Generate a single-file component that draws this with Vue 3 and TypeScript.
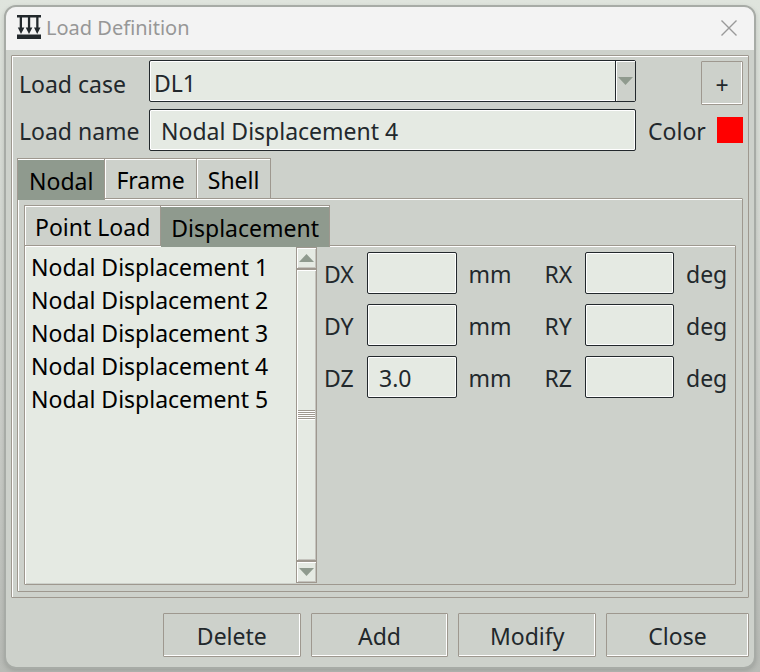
<script setup lang="ts">
import { ref } from 'vue'

interface Field {
  id: string
  value: string
  unit: string
}

const loadCase = ref('DL1')
const loadName = ref('Nodal Displacement 4')
const outerTabs = ['Nodal', 'Frame', 'Shell']
const innerTabs = ['Point Load', 'Displacement']
const outerTab = ref('Nodal')
const innerTab = ref('Displacement')
const loads = [1, 2, 3, 4, 5].map((n) => `Nodal Displacement ${n}`)
const actions = ['Delete', 'Add', 'Modify', 'Close']
const fields = ref<Field[]>([
  { id: 'DX', value: '', unit: 'mm' },
  { id: 'RX', value: '', unit: 'deg' },
  { id: 'DY', value: '', unit: 'mm' },
  { id: 'RY', value: '', unit: 'deg' },
  { id: 'DZ', value: '3.0', unit: 'mm' },
  { id: 'RZ', value: '', unit: 'deg' },
])

function pick(event: Event) {
  loadName.value = (event.target as HTMLSelectElement).value
}
</script>

<template>
  <main class="window">
    <header class="titlebar">
      <svg class="logo" viewBox="0 0 24 24" aria-hidden="true">
        <path d="M0 0H24V2.4H0ZM0 19.6H24V24H0Z" />
        <path d="M2.7 2H5V12.5H7.4L4 19L0.8 12.5H2.7ZM10.9 2H13.2V12.5H15.4L12 19L8.7 12.5H10.9ZM19.2 2H21.5V12.5H23.5L20.2 19L17 12.5H19.2Z" />
      </svg>
      <h1 class="title">Load Definition</h1>
      <button class="dismiss" type="button" aria-label="Close window">
        <svg viewBox="0 0 16 16"><path d="M0.5 0.5L15.5 15.5M15.5 0.5L0.5 15.5" /></svg>
      </button>
    </header>

    <section class="frame">
      <div class="head">
        <label for="load-case">Load case</label>
        <div class="combo">
          <select id="load-case" v-model="loadCase">
            <option>DL1</option>
          </select>
          <span class="drop"><svg viewBox="0 0 15 8"><path d="M0 0H15L7.5 8Z" /></svg></span>
        </div>
        <button class="btn plus" type="button">+</button>
        <label for="load-name">Load name</label>
        <input id="load-name" v-model="loadName" class="entry" type="text" />
        <div class="color">
          <label for="swatch">Color</label>
          <button id="swatch" class="swatch" type="button"></button>
        </div>
      </div>

      <nav class="tabs">
        <button
          v-for="tab in outerTabs"
          :key="tab"
          type="button"
          class="tab wide"
          :class="{ active: tab === outerTab }"
          @click="outerTab = tab"
        >{{ tab }}</button>
      </nav>
      <div class="pane outer">
        <nav class="tabs">
          <button
            v-for="tab in innerTabs"
            :key="tab"
            type="button"
            class="tab"
            :class="{ active: tab === innerTab }"
            @click="innerTab = tab"
          >{{ tab }}</button>
        </nav>
        <div class="pane inner">
          <select class="list" size="5" multiple aria-label="Loads" @change="pick">
            <option v-for="load in loads" :key="load">{{ load }}</option>
          </select>
          <div class="scroll">
            <button class="arrow" type="button" aria-label="Scroll up">
              <svg viewBox="0 0 15 8"><path d="M0 8H15L7.5 0Z" /></svg>
            </button>
            <div class="thumb"><span class="grip"></span></div>
            <button class="arrow" type="button" aria-label="Scroll down">
              <svg viewBox="0 0 15 8"><path d="M0 0H15L7.5 8Z" /></svg>
            </button>
          </div>
          <div class="fields">
            <template v-for="field in fields" :key="field.id">
              <label :for="field.id">{{ field.id }}</label>
              <input :id="field.id" v-model="field.value" class="entry" type="text" />
              <span class="unit">{{ field.unit }}</span>
            </template>
          </div>
        </div>
      </div>
    </section>

    <footer class="actions">
      <button v-for="action in actions" :key="action" class="btn" type="button">{{ action }}</button>
    </footer>
  </main>
</template>

<style>
body {
  background: linear-gradient(#dfe4dd, #cdd0cb 60%, #b8bbb6);
}
</style>

<style scoped>
.window {
  --face: #cdd1cb;
  --field: #e5eae3;
  --edge: #9e988f;
  --accent: #8f9a8e;
  --ink: #22282c;
  box-sizing: border-box;
  display: flex;
  flex-direction: column;
  min-height: calc(100vh - 8px);
  margin: 5px 4px 3px;
  border: 2px solid #a7aba6;
  border-radius: 12px;
  overflow: hidden;
  background: var(--face);
  color: var(--ink);
  font: 23px/32px "Noto Sans", "Open Sans", sans-serif;
  box-shadow: 0 2px 5px rgba(0, 0, 0, 0.15);
}
.window * {
  box-sizing: border-box;
}
button,
input,
select {
  margin: 0;
  padding: 0;
  border: 0;
  border-radius: 0;
  outline: 0;
  background: none;
  color: inherit;
  font: inherit;
}
svg {
  display: block;
}
.titlebar {
  display: flex;
  align-items: center;
  height: 43px;
  padding: 0 17px 2px 11px;
  background: #f3f3f3;
}
.logo {
  width: 24px;
  height: 24px;
  margin-bottom: 2px;
  fill: #22282c;
}
.title {
  flex: 1;
  margin: 0 5px;
  padding-top: 1px;
  color: #979797;
  font-size: 20px;
  font-weight: 400;
}
.dismiss svg {
  width: 16px;
  height: 16px;
  fill: none;
  stroke: #999;
  stroke-width: 1.4;
}
.frame {
  flex: 1;
  display: flex;
  flex-direction: column;
  margin: 5px 5px 0;
  padding: 4px 5px 5px;
  border: 1px solid var(--edge);
  border-radius: 1px;
  box-shadow: inset 1px 1px #fff;
}
.head {
  display: grid;
  grid-template-columns: 130px 1fr 107px;
  grid-template-rows: 45px 42px;
  align-items: center;
  row-gap: 4px;
  margin-bottom: 2px;
  padding-left: 2px;
}
.head label {
  padding-top: 2px;
}
.combo {
  position: relative;
  align-self: start;
  height: 42px;
}
.combo select {
  width: 100%;
  height: 100%;
  padding: 3px 24px 0 4px;
  appearance: none;
}
.combo select,
.entry {
  border: 1px solid var(--ink);
  border-radius: 2px;
  background: var(--field);
  box-shadow: inset 0 0 0 1px #fff;
}
.drop {
  position: absolute;
  top: 1px;
  right: 1px;
  bottom: 1px;
  display: grid;
  place-items: center;
  width: 20px;
  border-left: 1px solid var(--ink);
  background: var(--face);
  box-shadow: inset 1px 1px #fff;
  pointer-events: none;
}
.drop svg,
.arrow svg {
  width: 15px;
  height: 8px;
  fill: var(--accent);
}
.entry {
  width: 100%;
  height: 42px;
  padding: 2px 11px 0;
}
.btn {
  height: 44px;
  padding-top: 2px;
  border: 1px solid var(--edge);
  border-radius: 1px;
  box-shadow: inset -1px -1px #fff;
}
.plus {
  place-self: end;
  width: 42px;
  padding-top: 4px;
}
.color {
  display: flex;
  align-items: center;
  justify-content: space-between;
  padding-left: 12px;
}
.swatch {
  width: 26px;
  height: 26px;
  background: #f00;
}
.tabs {
  display: flex;
  margin-top: 5px;
}
.tab {
  height: 41px;
  padding: 2px 10px 0;
  border: 1px solid var(--edge);
  border-left-width: 0;
  border-bottom: 0;
  box-shadow: inset 1px 1px #fff;
  color: #000;
}
.tab.wide {
  padding: 2px 11px 0;
}
.tab:first-child {
  border-left-width: 1px;
}
.tab.active {
  position: relative;
  height: 42px;
  margin-bottom: -1px;
  background: var(--accent);
  box-shadow: inset 0 1px #fff;
}
.pane {
  flex: 1;
  display: flex;
  margin-top: -1px;
  border: 1px solid var(--edge);
  border-radius: 1px;
  box-shadow: inset 1px 1px #fff;
}
.outer {
  flex-direction: column;
  padding: 1px 6px 6px;
}
.inner {
  padding: 1px 0 1px 1px;
}
.list {
  flex: none;
  width: 270px;
  padding: 4px 0;
  overflow: hidden;
  background: var(--field);
  color: #000;
}
.list option {
  min-height: 33px;
  padding: 0 5px;
  line-height: 33px;
}
.scroll {
  flex: none;
  display: flex;
  flex-direction: column;
  width: 21px;
  border: 1px solid var(--edge);
  background: var(--field);
}
.arrow {
  display: grid;
  place-items: center;
  height: 20px;
  box-shadow: inset 1px 1px #fff, inset -1px -1px #c4c3bd;
}
.thumb {
  flex: 1;
  display: grid;
  place-items: center;
  border: solid var(--edge);
  border-width: 2px 0;
  box-shadow: inset 1px 1px #fff, inset -1px -1px #c4c3bd;
}
.grip {
  width: 17px;
  height: 10px;
  background: repeating-linear-gradient(var(--edge) 0 1px, #fff 1px 2px);
}
.fields {
  flex: 1;
  display: grid;
  grid-template-columns: 43px 1fr 88px 40px 1fr 61px;
  grid-auto-rows: 42px;
  align-content: start;
  align-items: center;
  row-gap: 10px;
  padding: 5px 0 0 7px;
}
.unit {
  padding-left: 12px;
}
.fields label,
.unit {
  padding-top: 2px;
}
.actions {
  display: grid;
  grid-template-columns: 1fr 1fr 1fr 143px;
  gap: 10px;
  margin: 15px 5px 10px 157px;
}
</style>
